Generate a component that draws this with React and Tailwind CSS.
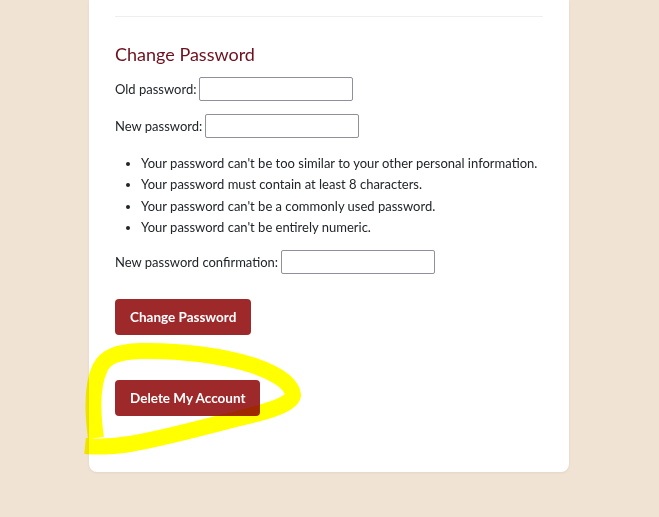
export default function App() {
  const rules = [
    "Your password can't be too similar to your other personal information.",
    "Your password must contain at least 8 characters.",
    "Your password can't be a commonly used password.",
    "Your password can't be entirely numeric.",
  ];

  return (
    <div className="min-h-[517px] w-full bg-[#f0e3d4] font-['Lato',sans-serif] text-[13px] text-[#212529]">
      <div className="relative ml-[89px] w-[480px] rounded-b-lg bg-white px-[26px] pb-[56px] pt-4 shadow-[0_1px_3px_rgba(0,0,0,0.06)]">
        <hr className="border-t border-[#eeeeee]" />

        <h2 className="mt-[26px] text-[18px] leading-[22px] text-[#6d0f1c]">Change Password</h2>

        <div className="mt-[12px] flex items-center">
          <label className="mr-[3px] pt-[2px]">Old password:</label>
          <input type="password" className="h-6 w-[154px] rounded-[2px] border border-[#8f8f9d] bg-white" />
        </div>

        <div className="mt-[13px] flex items-center">
          <label className="mr-[3px] pt-[2px]">New password:</label>
          <input type="password" className="h-6 w-[154px] rounded-[2px] border border-[#8f8f9d] bg-white" />
        </div>

        <ul className="mt-[15px] list-disc whitespace-nowrap pl-[26px] leading-[21.3px]">
          {rules.map((r) => (
            <li key={r} className="h-[21.3px]">{r}</li>
          ))}
        </ul>

        <div className="mt-[12px] flex items-center">
          <label className="mr-[3px] pt-[2px]">New password confirmation:</label>
          <input type="password" className="h-6 w-[154px] rounded-[2px] border border-[#8f8f9d] bg-white" />
        </div>

        <button className="mt-[25px] flex h-9 items-center rounded-[4px] bg-[#9e292b] px-[15px] text-[13.5px] font-bold text-white">
          Change Password
        </button>

        <button className="mt-[45px] flex h-9 items-center rounded-[4px] bg-[#9e292b] px-[15px] text-[13.5px] font-bold text-white">
          Delete My Account
        </button>

        <svg
          className="pointer-events-none absolute left-0 top-0 overflow-visible"
          width="480"
          height="472"
          viewBox="89 0 480 472"
        >
          <path
            d="M96 438 C92 410 92 385 100 368 C106 356 118 352 140 351 C180 350 225 356 255 366 C278 374 292 384 293 395 C292 404 270 411 240 418 C200 428 165 438 130 444 C110 447 95 447 85 446"
            fill="none"
            stroke="#ffff00"
            strokeWidth="16"
            strokeLinejoin="round"
            style={{ mixBlendMode: "multiply" }}
          />
        </svg>
      </div>
    </div>
  );
}
